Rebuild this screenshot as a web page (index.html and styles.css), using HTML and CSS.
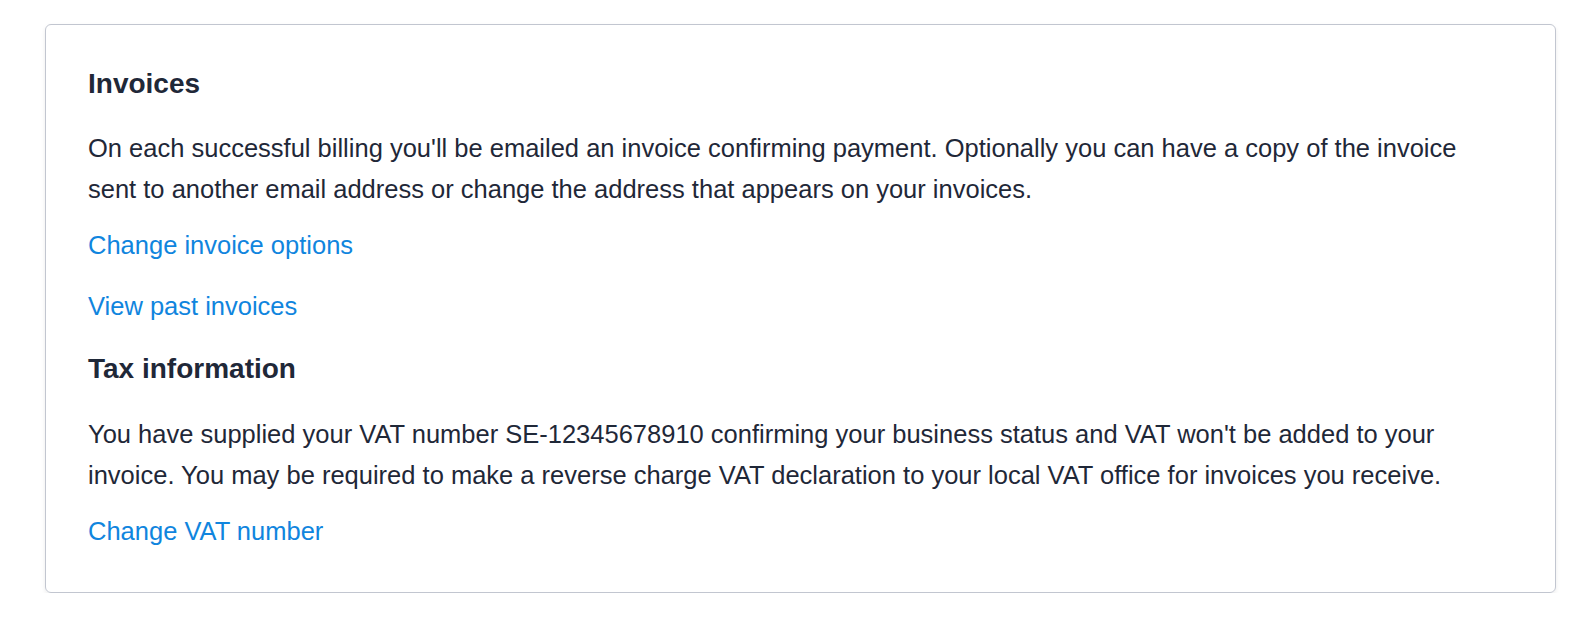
FILE: index.html
```html
<!DOCTYPE html>
<html>
<head>
    <meta charset="UTF-8">
    <title>Billing</title>
    <link rel="stylesheet" href="styles.css">
</head>
<body>
    <div class="panel">
        <h2>Invoices</h2>
        <p>On each successful billing you'll be emailed an invoice confirming payment. Optionally you can have a copy of the invoice sent to another email address or change the address that appears on your invoices.</p>
        <a href="#" class="action">Change invoice options</a>
        <a href="#" class="action">View past invoices</a>

        <h2>Tax information</h2>
        <p>You have supplied your VAT number SE-12345678910 confirming your business status and VAT won't be added to your invoice. You may be required to make a reverse charge VAT declaration to your local VAT office for invoices you receive.</p>
        <a href="#" class="action">Change VAT number</a>
    </div>
</body>
</html>
```

FILE: styles.css
```css
body {
    font-family: "Liberation Sans", Arial, sans-serif;
    background-color: #fff;
    color: #1f2838;
    margin: 0;
    padding: 24px 38px 0 45px;
}
.panel {
    border: 1px solid #c2c6d0;
    border-radius: 6px;
    box-shadow: 0 2px 4px rgba(0, 0, 0, 0.08);
    padding: 42px 42px 41px 42px;
    box-sizing: border-box;
    height: 569px;
}
h2 {
    font-size: 28px;
    line-height: 34px;
    font-weight: 700;
    margin: 0 0 27px 0;
}
p {
    font-size: 25.5px;
    line-height: 40.5px;
    max-width: 1390px;
    margin: 0 0 16px 0;
}
.action {
    display: block;
    width: fit-content;
    font-size: 25.5px;
    line-height: 40.5px;
    color: #1085de;
    text-decoration: none;
    margin-bottom: 20px;
}
.action + h2 {
    margin-top: 26px;
    margin-bottom: 28px;
}
```
